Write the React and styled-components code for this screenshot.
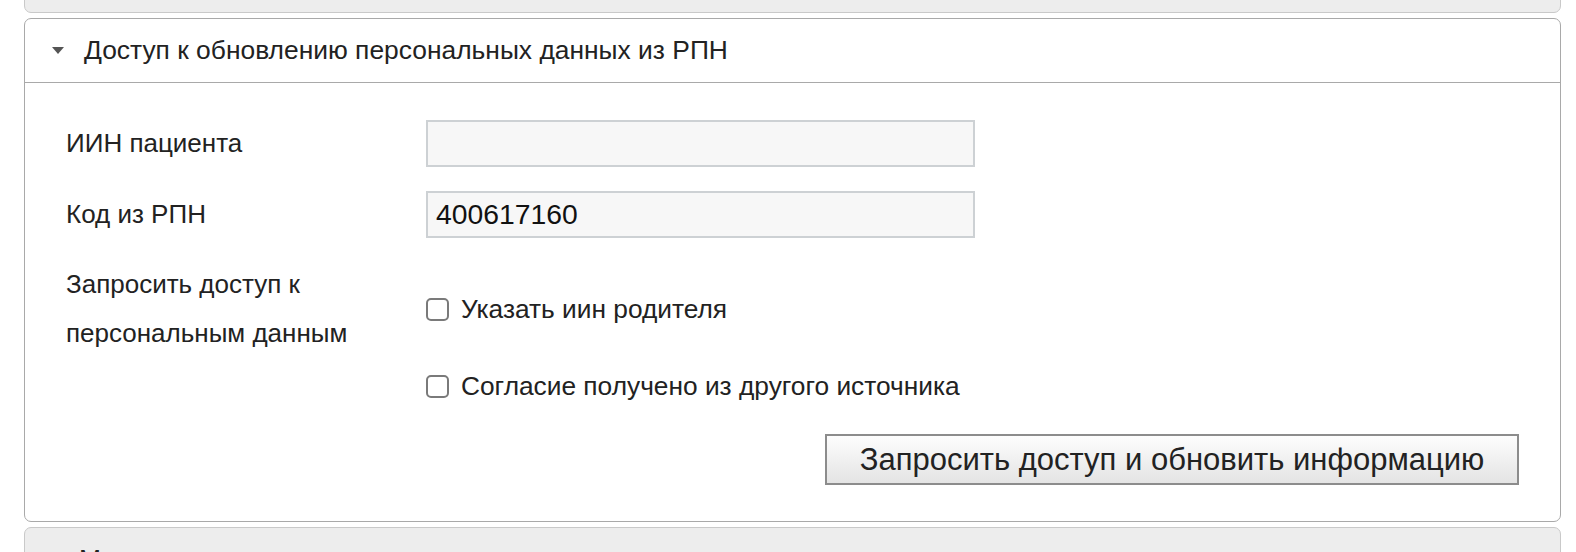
import styled, { createGlobalStyle } from "styled-components";

const GlobalStyle = createGlobalStyle`
	html, body {
		margin: 0;
		padding: 0;
		background: #ffffff;
		overflow: hidden;
	}
	body {
		font-family: "Liberation Sans", Arial, sans-serif;
		color: #222;
	}
`;

const Page = styled.div`
	display: flex;
	flex-direction: column;
	gap: 5px;
	padding: 0 15px 0 24px;
	margin-top: -52px;
	height: 610px;
`;

const Panel = styled.section`
	border: 1px solid ${(p) => (p.$open ? "#a9a9a9" : "#c9c9c9")};
	border-radius: 7px;
	background: ${(p) => (p.$open ? "#ffffff" : "#ededed")};
	overflow: hidden;
	flex-shrink: 0;
`;

const Header = styled.div`
	display: flex;
	align-items: center;
	gap: 20px;
	height: 63px;
	padding-left: 27px;
	font-size: 26.4px;
	color: #222;
	border-bottom: ${(p) => (p.$open ? "1px solid #a9a9a9" : "none")};
`;

const Caret = styled.span`
	display: inline-block;
	width: 0;
	height: 0;
	${(p) =>
		p.$open
			? `border-left: 6px solid transparent;
	border-right: 6px solid transparent;
	border-top: 7px solid #555;`
			: `border-top: 6px solid transparent;
	border-bottom: 6px solid transparent;
	border-left: 7px solid #c8c8c8;`}
`;

const Body = styled.div`
	display: flex;
	flex-direction: column;
	padding: 36px 41px 36px 41px;
`;

const Row = styled.div`
	display: grid;
	grid-template-columns: 360px 549px;
	align-items: center;
	margin-top: ${(p) => p.$gap || 0}px;
`;

const Label = styled.div`
	font-size: 26px;
	line-height: 49px;
	color: #222;
	white-space: nowrap;
`;

const Input = styled.input`
	box-sizing: border-box;
	height: 47px;
	width: 549px;
	padding: 0 8px;
	background: #f7f7f7;
	border: 2px solid #cdd1d4;
	font-family: "Liberation Sans", Arial, sans-serif;
	font-size: 28.3px;
	color: #111;
	outline: none;
`;

const CheckLine = styled.label`
	display: flex;
	align-items: center;
	gap: 12px;
	font-size: 26.3px;
	line-height: 30px;
	color: #222;
	white-space: nowrap;
`;

const Box = styled.span`
	box-sizing: border-box;
	width: 23px;
	height: 23px;
	border: 2px solid #7a7a7a;
	border-radius: 5px;
	background: #fff;
	flex-shrink: 0;
`;

const Actions = styled.div`
	display: flex;
	justify-content: flex-end;
	margin-top: 33px;
`;

const Button = styled.button`
	box-sizing: border-box;
	width: 694px;
	height: 51px;
	border: 2px solid #8c8c8c;
	background: linear-gradient(#fdfdfd, #e4e4e4);
	font-family: "Liberation Sans", Arial, sans-serif;
	font-size: 31px;
	color: #222;
	padding: 0;
	white-space: nowrap;
`;

function Checkbox({ children }) {
	return (
		<CheckLine>
			<Box />
			{children}
		</CheckLine>
	);
}

export default function App() {
	return (
		<>
			<GlobalStyle />
			<Page>
				<Panel>
					<Header>
						<Caret />
						Сведения о пациенте
					</Header>
				</Panel>
				<Panel $open>
					<Header $open>
						<Caret $open />
						Доступ к обновлению персональных данных из РПН
					</Header>
					<Body>
						<Row>
							<Label>ИИН пациента</Label>
							<Input defaultValue="" />
						</Row>
						<Row $gap={22}>
							<Label>Код из РПН</Label>
							<Input defaultValue="400617160" />
						</Row>
						<Row $gap={21}>
							<Label>
								Запросить доступ к<br />
								персональным данным
							</Label>
							<Checkbox>Указать иин родителя</Checkbox>
						</Row>
						<Row $gap={13}>
							<span />
							<Checkbox>Согласие получено из другого источника</Checkbox>
						</Row>
						<Actions>
							<Button>Запросить доступ и обновить информацию</Button>
						</Actions>
					</Body>
				</Panel>
				<Panel>
					<Header>
						<Caret />
						Медицинская карта
					</Header>
				</Panel>
			</Page>
		</>
	);
}
